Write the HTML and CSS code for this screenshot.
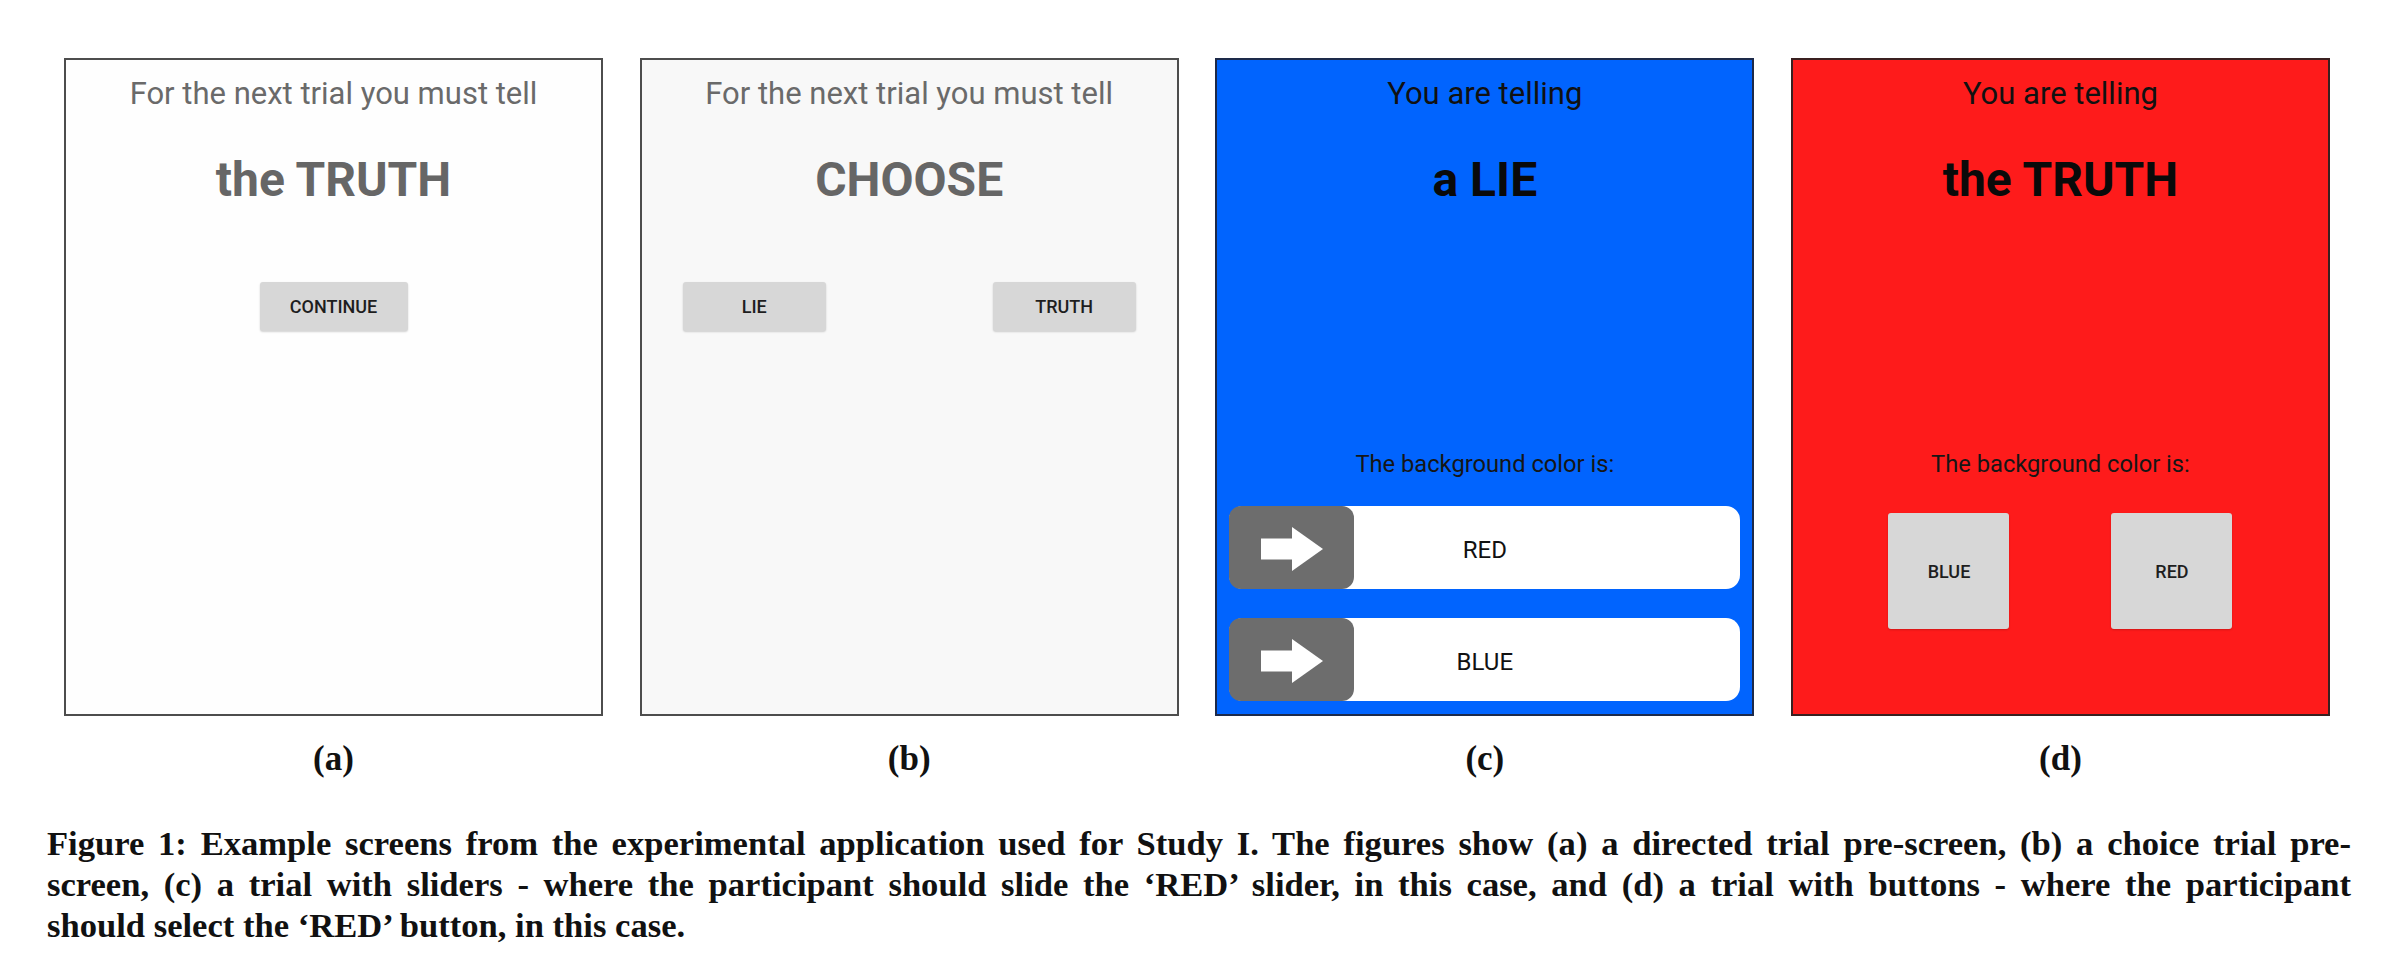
FILE: index.html
```html
<!DOCTYPE html>
<html lang="en">
<head>
<meta charset="utf-8">
<title>Figure 1</title>
<link rel="stylesheet" href="styles.css">
</head>
<body>
<main class="figure">
  <div class="panels">
    <section class="screen screen-white">
      <div class="lead lead-gray">For the next trial you must tell</div>
      <div class="big big-gray">the TRUTH</div>
      <div class="btn-row btn-row-center">
        <div class="btn btn-continue">CONTINUE</div>
      </div>
    </section>

    <section class="screen screen-light">
      <div class="lead lead-gray">For the next trial you must tell</div>
      <div class="big big-gray">CHOOSE</div>
      <div class="btn-row btn-row-split">
        <div class="btn btn-choice">LIE</div>
        <div class="btn btn-choice">TRUTH</div>
      </div>
    </section>

    <section class="screen screen-blue">
      <div class="lead lead-dark">You are telling</div>
      <div class="big big-dark">a LIE</div>
      <div class="prompt">The background color is:</div>
      <div class="sliders">
        <div class="slider">
          <div class="thumb">
            <svg class="arrow" width="62" height="44" viewBox="0 0 62 44"><rect x="0" y="11.5" width="32" height="21" fill="#fff"/><polygon points="31,0 62,22 31,44" fill="#fff"/></svg>
          </div>
          <span class="slider-label">RED</span>
        </div>
        <div class="slider">
          <div class="thumb">
            <svg class="arrow" width="62" height="44" viewBox="0 0 62 44"><rect x="0" y="11.5" width="32" height="21" fill="#fff"/><polygon points="31,0 62,22 31,44" fill="#fff"/></svg>
          </div>
          <span class="slider-label">BLUE</span>
        </div>
      </div>
    </section>

    <section class="screen screen-red">
      <div class="lead lead-dark">You are telling</div>
      <div class="big big-dark">the TRUTH</div>
      <div class="prompt">The background color is:</div>
      <div class="square-row">
        <div class="btn btn-square">BLUE</div>
        <div class="btn btn-square">RED</div>
      </div>
    </section>
  </div>

  <div class="labels">
    <div class="label">(a)</div>
    <div class="label">(b)</div>
    <div class="label">(c)</div>
    <div class="label">(d)</div>
  </div>

  <p class="caption">
    <span class="cap-line">Figure 1: Example screens from the experimental application used for Study I. The figures show (a) a directed trial pre-screen, (b) a choice trial pre-</span>
    <span class="cap-line">screen, (c) a trial with sliders - where the participant should slide the ‘RED’ slider, in this case, and (d) a trial with buttons - where the participant</span>
    <span class="cap-line cap-last">should select the ‘RED’ button, in this case.</span>
  </p>
</main>
</body>
</html>
```

FILE: styles.css
```css
html, body {
  margin: 0;
  padding: 0;
  background: #ffffff;
}

.figure {
  width: 2400px;
  padding-top: 58px;
  box-sizing: border-box;
}

.panels {
  display: flex;
  gap: 36.67px;
  padding-left: 64px;
}

.screen {
  width: 539px;
  height: 658px;
  box-sizing: border-box;
  border: 2px solid #4d4d4d;
  padding-top: 16px;
  display: flex;
  flex-direction: column;
  align-items: center;
  font-family: Roboto, "Liberation Sans", sans-serif;
}

.screen-white { background: #fefefe; }
.screen-light { background: #f8f8f8; }
.screen-blue { background: #0164fe; border-color: #1d2a4a; }
.screen-red { background: #fe1b1b; border-color: #3a2020; }

.lead {
  font-size: 31px;
  line-height: 36px;
  font-weight: 400;
}
.lead-gray { color: #6a6a6a; }
.lead-dark { color: #111111; }

.big {
  margin-top: 40px;
  font-size: 48px;
  line-height: 56px;
  font-weight: 700;
}
.big-gray { color: #666666; }
.big-dark { color: #0a0a0a; }

.btn-row {
  margin-top: 74px;
  width: 100%;
  display: flex;
  box-sizing: border-box;
}
.btn-row-center { justify-content: center; }
.btn-row-split { justify-content: space-between; padding: 0 41px; }

.btn {
  background: #d7d7d7;
  border-radius: 3px;
  box-shadow: 0 1px 2px rgba(0, 0, 0, 0.18);
  display: flex;
  align-items: center;
  justify-content: center;
  font-size: 18px;
  font-weight: 500;
  color: #1e1e1e;
}
.btn-continue { width: 148px; height: 49px; }
.btn-choice { width: 143px; height: 49px; }

.prompt {
  margin-top: 243px;
  font-size: 23.7px;
  line-height: 27px;
  color: #161616;
}

.sliders {
  margin-top: 28px;
  width: 100%;
  padding: 0 12px;
  box-sizing: border-box;
  display: flex;
  flex-direction: column;
  gap: 29px;
}

.slider {
  position: relative;
  height: 83px;
  background: #ffffff;
  border-radius: 14px;
  display: flex;
  align-items: center;
  justify-content: center;
}

.thumb {
  position: absolute;
  left: 0;
  top: 0;
  width: 125px;
  height: 83px;
  background: #6d6d6d;
  border-radius: 12px;
  display: flex;
  align-items: center;
  justify-content: center;
}

.arrow {
  display: block;
  margin-top: 2px;
}

.slider-label {
  font-size: 24px;
  color: #111111;
  padding-top: 4px;
}

.square-row {
  margin-top: 35px;
  display: flex;
  gap: 102px;
}

.btn-square {
  width: 121px;
  height: 116px;
}

.labels {
  display: flex;
  gap: 36.67px;
  padding-left: 64px;
  margin-top: 23px;
}

.label {
  width: 539px;
  text-align: center;
  font-family: "Liberation Serif", "Times New Roman", serif;
  font-weight: 700;
  font-size: 35px;
  line-height: 40px;
  color: #111111;
}

.caption {
  margin: 44px 0 0 47px;
  width: 2304px;
  font-family: "Liberation Serif", "Times New Roman", serif;
  font-weight: 700;
  font-size: 34.6px;
  line-height: 41px;
  color: #111111;
}

.cap-line {
  display: block;
  text-align: justify;
  text-align-last: justify;
}

.cap-last {
  text-align: left;
  text-align-last: left;
}
```
